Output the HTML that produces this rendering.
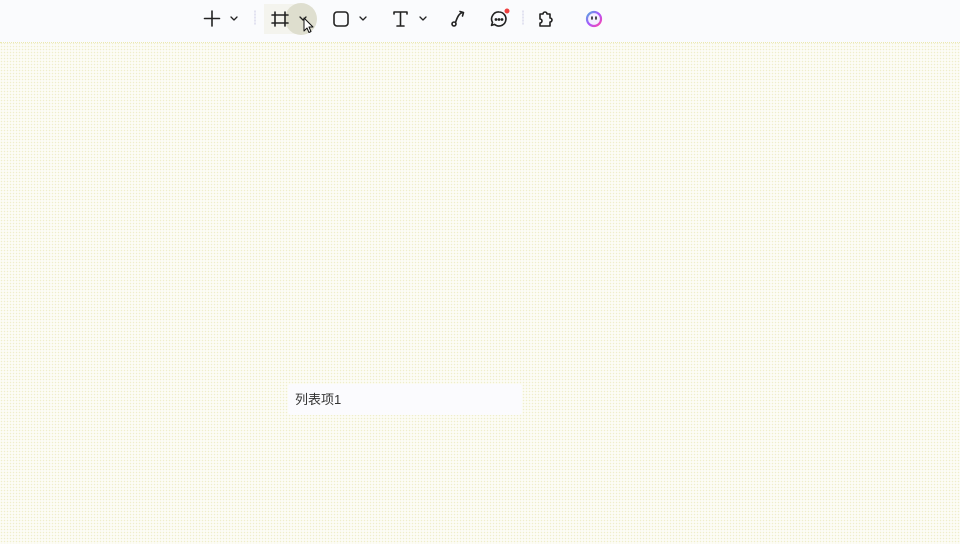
<!DOCTYPE html>
<html><head><meta charset="utf-8"><style>
html,body{margin:0;padding:0}
body{width:960px;height:544px;overflow:hidden;position:relative;font-family:"Liberation Sans","Noto Sans CJK SC",sans-serif;
background-color:#fcfcf6;
background-image:radial-gradient(circle,rgba(225,222,160,.5) 0.6px,transparent 0.9px);
background-size:3px 3px;}
.tb{position:absolute;left:0;top:0;width:960px;height:42px;background:#fafbfd;border-bottom:1px dotted #ece9b0}
.tb svg{position:absolute}
.item{position:absolute;left:288px;top:384px;width:234px;height:31px;background:#fbfbfe;border-radius:3px;font-size:13px;color:#333;line-height:32px;padding-left:7px;box-sizing:border-box}
</style></head><body>
<div class="tb">
<svg width="960" height="42" viewBox="0 0 960 42" fill="none" stroke="#222" stroke-width="1.6" stroke-linecap="round" stroke-linejoin="round">
<path d="M212 11v15M204.5 18.5h15"/>
<path d="M231 17l3 3 3-3" stroke-width="1.3"/>
<line x1="255" y1="11" x2="255" y2="26" stroke="#dde" stroke-dasharray="1 2"/>
<rect x="264" y="4" width="36" height="30" fill="#eeeedf" stroke="none" opacity=".5"/>
<circle cx="301" cy="19" r="16" fill="#d9d9c8" stroke="none" opacity=".85"/>
<path d="M275 12v14M285 12v14M272 15h16M272 23h16"/>
<path d="M300 17l3 3 3-3" stroke-width="1.3"/>
<rect x="334" y="12" width="14" height="14" rx="3"/>
<path d="M360 17l3 3 3-3" stroke-width="1.3"/>
<path d="M394 12h13M400.5 12v14M397 26h7M394 12v2M407 12v2"/>
<path d="M420 17l3 3 3-3" stroke-width="1.3"/>
<circle cx="454" cy="24" r="2"/>
<path d="M455.5 22.5c2-6 4-10 8-10M460 11.5l3.5 1-1 3.5"/>
<path d="M499 12a7 7 0 1 1-4.5 12.4l-3 1 1-3A7 7 0 0 1 499 12z"/>
<circle cx="496" cy="19.5" r=".6" fill="#222"/><circle cx="499" cy="19.5" r=".6" fill="#222"/><circle cx="502" cy="19.5" r=".6" fill="#222"/>
<circle cx="507" cy="11" r="2.5" fill="#f04040" stroke="none"/>
<line x1="523" y1="11" x2="523" y2="26" stroke="#dde" stroke-dasharray="1 2"/>
<path d="M540 14h3a2 2 0 1 1 4 0h3v4a2 2 0 1 1 0 4v4h-10v-3a2 2 0 1 0 0-4z"/>
<defs><linearGradient id="g" x1="0" y1="0" x2="1" y2="1"><stop offset="0" stop-color="#5ad"/><stop offset=".5" stop-color="#a5f"/><stop offset="1" stop-color="#f4a"/></linearGradient></defs>
<circle cx="594" cy="19" r="7" stroke="url(#g)" stroke-width="2.2" fill="#f4f0ff"/>
<path d="M592 17v2M596 17v2" stroke="#222"/>
<path d="M304 18v13l3-3 2 4.5 2-1-2-4.5h4z" fill="#fff" stroke="#111" stroke-width="1"/>
</svg>
</div>
<div class="item">列表项1</div>
</body></html>
